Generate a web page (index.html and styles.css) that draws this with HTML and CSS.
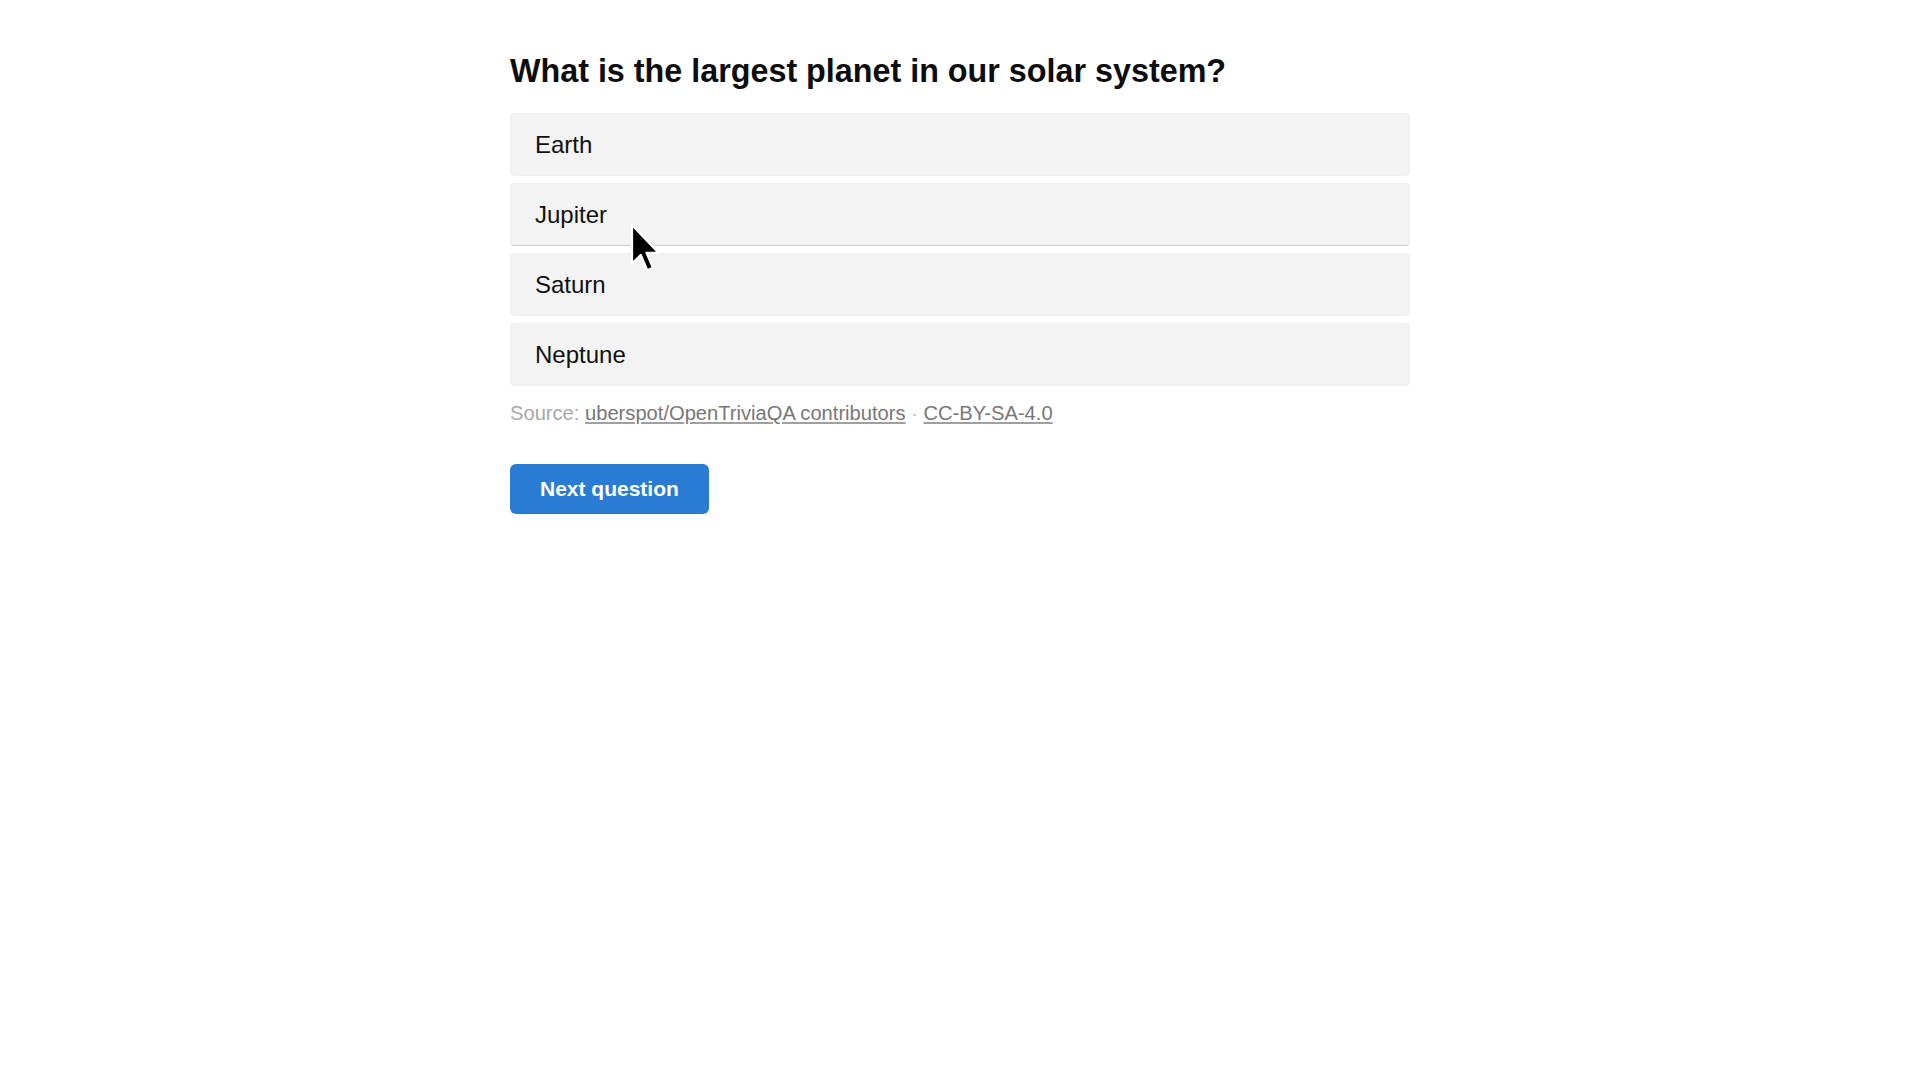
FILE: index.html
```html
<!DOCTYPE html>
<html lang="en">
<head>
<meta charset="utf-8">
<title>Trivia</title>
<link rel="stylesheet" href="styles.css">
</head>
<body>
<main class="quiz">
  <h1 class="question">What is the largest planet in our solar system?</h1>
  <div class="options">
    <button class="option">Earth</button>
    <button class="option option-hover">Jupiter</button>
    <button class="option">Saturn</button>
    <button class="option">Neptune</button>
  </div>
  <p class="source">Source: <a href="#">uberspot/OpenTriviaQA contributors</a> <span class="dot">·</span> <a href="#">CC-BY-SA-4.0</a></p>
  <button class="next">Next question</button>
</main>
<svg class="cursor" width="30" height="50" viewBox="0 0 12 20" preserveAspectRatio="none" aria-hidden="true">
  <path d="M0.8 0.8 L0.8 16.2 L4.3 12.8 L6.9 18.9 L9.2 17.9 L6.6 11.9 L11.4 11.9 Z" fill="#000" stroke="#fff" stroke-width="0.9" stroke-linejoin="round"/>
</svg>
</body>
</html>
```

FILE: styles.css
```css
html, body {
  margin: 0;
  padding: 0;
  background: #ffffff;
}

body {
  font-family: "Liberation Sans", Arial, Helvetica, sans-serif;
  color: #111111;
}

.quiz {
  max-width: 900px;
  margin: 0 auto;
  padding-top: 52px;
}

.question {
  margin: 0;
  font-size: 32.3px;
  line-height: 38px;
  font-weight: 700;
  color: #0d0d0d;
}

.options {
  margin-top: 23px;
  display: flex;
  flex-direction: column;
  gap: 7px;
}

.option {
  display: block;
  width: 100%;
  text-align: left;
  font-family: inherit;
  font-size: 24px;
  line-height: 29px;
  color: #111111;
  background: #f3f3f3;
  border: 1px solid #efefef;
  border-radius: 4px;
  padding: 16px 24px;
  margin: 0;
  cursor: pointer;
}

.option-hover {
  border-bottom-color: #cfcfcf;
}

.source {
  margin: 15px 0 0;
  font-size: 20.15px;
  line-height: 24px;
  color: #a8a8a8;
}

.source a {
  color: #787878;
  text-decoration: underline;
  text-decoration-color: #a0a0a0;
  text-underline-offset: 2px;
}

.source .dot {
  color: #b5b5b5;
}

.next {
  display: inline-block;
  margin-top: 39px;
  padding: 11px 30px;
  font-family: inherit;
  font-size: 21px;
  line-height: 28px;
  font-weight: 700;
  color: #ffffff;
  background: #2a7bd3;
  border: none;
  border-radius: 6px;
  cursor: pointer;
}

.cursor {
  position: fixed;
  left: 630px;
  top: 223px;
}
```
